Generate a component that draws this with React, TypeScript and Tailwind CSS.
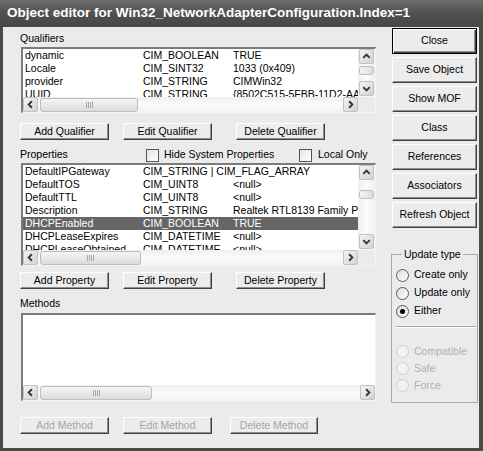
import React from "react";

type Row = { name: string; type: string; value: string; selected?: boolean };

const qualifiers: Row[] = [
  { name: "dynamic", type: "CIM_BOOLEAN", value: "TRUE" },
  { name: "Locale", type: "CIM_SINT32", value: "1033 (0x409)" },
  { name: "provider", type: "CIM_STRING", value: "CIMWin32" },
  { name: "UUID", type: "CIM_STRING", value: "{8502C515-5FBB-11D2-AAC1-006008C78BC7}" },
];

const properties: Row[] = [
  { name: "DefaultIPGateway", type: "CIM_STRING | CIM_FLAG_ARRAY", value: "" },
  { name: "DefaultTOS", type: "CIM_UINT8", value: "<null>" },
  { name: "DefaultTTL", type: "CIM_UINT8", value: "<null>" },
  { name: "Description", type: "CIM_STRING", value: "Realtek RTL8139 Family PCI Fast Ethernet NIC" },
  { name: "DHCPEnabled", type: "CIM_BOOLEAN", value: "TRUE", selected: true },
  { name: "DHCPLeaseExpires", type: "CIM_DATETIME", value: "<null>" },
  { name: "DHCPLeaseObtained", type: "CIM_DATETIME", value: "<null>" },
];

function Chevron({ dir }: { dir: "up" | "down" | "left" | "right" }) {
  const pts = {
    up: "3.5,8.5 7,5 10.5,8.5",
    down: "3.5,5.5 7,9 10.5,5.5",
    left: "8.5,3.5 5,7 8.5,10.5",
    right: "5.5,3.5 9,7 5.5,10.5",
  }[dir];
  return (
    <svg width="13" height="13" viewBox="0 0 14 14">
      <polyline points={pts} fill="none" stroke="#353535" strokeWidth="2" />
    </svg>
  );
}

function ArrowButton({ dir }: { dir: "up" | "down" | "left" | "right" }) {
  return (
    <div className="flex h-[15px] w-[15px] shrink-0 items-center justify-center rounded-[2px] border border-[#c2c2c2] bg-gradient-to-br from-[#f4f4f4] to-[#d2d2d2]">
      <Chevron dir={dir} />
    </div>
  );
}

function Grip() {
  return (
    <div className="flex gap-[1px]">
      {[0, 1, 2, 3].map((i) => (
        <div key={i} className="h-[6px] w-[1px] bg-[#a8a8a8]" />
      ))}
    </div>
  );
}

function HScroll({ thumb }: { thumb: string }) {
  return (
    <div className="flex h-[15px] shrink-0 items-center bg-gradient-to-b from-[#efefef] via-[#fbfbfb] to-[#f2f2f2]">
      <ArrowButton dir="left" />
      <div
        className={`ml-[2px] flex h-[14px] items-center justify-center rounded-[3px] border border-[#bdbdbd] bg-gradient-to-b from-[#f5f5f5] to-[#dcdcdc] ${thumb}`}
      >
        <Grip />
      </div>
      <div className="flex-1" />
      <ArrowButton dir="right" />
    </div>
  );
}

function VScroll({ thumbTop }: { thumbTop: string }) {
  return (
    <div className="flex w-[17px] shrink-0 flex-col items-center bg-gradient-to-r from-[#efefef] via-[#fbfbfb] to-[#f2f2f2]">
      <ArrowButton dir="up" />
      <div className={`h-[9px] w-[15px] rounded-[3px] border border-[#bdbdbd] bg-gradient-to-r from-[#f5f5f5] to-[#dcdcdc] ${thumbTop}`} />
      <div className="flex-1" />
      <div className="mb-[1px]">
        <ArrowButton dir="down" />
      </div>
    </div>
  );
}

function ListRows({ rows }: { rows: Row[] }) {
  return (
    <div className="flex-1 overflow-hidden">
      {rows.map((r) => (
        <div
          key={r.name}
          className={`flex h-[13px] items-center whitespace-nowrap leading-[13px] ${
            r.selected ? "bg-[#666666] text-white" : "text-black"
          }`}
        >
          <div className="w-[120px] shrink-0 pl-[2px]">{r.name}</div>
          <div className="w-[90px] shrink-0 overflow-visible">{r.type}</div>
          <div className="overflow-hidden">{r.value}</div>
        </div>
      ))}
    </div>
  );
}

function ListBox({ rows, height, thumb, thumbTop }: { rows: Row[]; height: string; thumb: string; thumbTop: string }) {
  return (
    <div className={`ml-[1px] flex w-[355px] flex-col border-t-2 border-l-2 border-r border-b border-t-[#7c7c7c] border-l-[#7c7c7c] border-r-[#f4f4f4] border-b-[#f4f4f4] bg-white ${height}`}>
      <div className="flex min-h-0 flex-1">
        <ListRows rows={rows} />
        <VScroll thumbTop={thumbTop} />
      </div>
      <div className="flex">
        <div className="flex-1">
          <HScroll thumb={thumb} />
        </div>
        <div className="w-[17px] bg-[#ebebeb]" />
      </div>
    </div>
  );
}

function Btn({ label, className = "", disabled, def }: { label: string; className?: string; disabled?: boolean; def?: boolean }) {
  return (
    <div
      className={`flex items-center justify-center border-t border-l border-r border-b bg-[#ececec] ${
        def
          ? "border-black shadow-[inset_1px_1px_0_#ffffff,inset_-1px_-1px_0_#404040,inset_-2px_-2px_0_#8e8e8e]"
          : "border-t-white border-l-white border-r-[#404040] border-b-[#404040] shadow-[inset_-1px_-1px_0_#8e8e8e]"
      } ${disabled ? "text-[#a6a6a6]" : "text-black"} ${className}`}
    >
      {label}
    </div>
  );
}

function Checkbox() {
  return <div className="h-[13px] w-[13px] shrink-0 border border-[#555] bg-gradient-to-br from-[#e4e4e4] to-white" />;
}

function Radio({ label, checked, disabled }: { label: string; checked?: boolean; disabled?: boolean }) {
  return (
    <div className="flex h-full items-center">
      <div
        className={`flex h-[13px] w-[13px] items-center justify-center rounded-full border ${
          disabled ? "border-[#cfcfcf] bg-[#f2f2f2]" : "border-[#5a5a5a] bg-gradient-to-br from-[#dcdcdc] to-white"
        }`}
      >
        {checked && <div className="h-[5px] w-[5px] rounded-full bg-black" />}
      </div>
      <span className={`ml-[5px] ${disabled ? "text-[#b0b0b0]" : "text-black"}`}>{label}</span>
    </div>
  );
}

export default function App() {
  return (
    <div className="flex h-[451px] w-[483px] flex-col bg-[#4a4a4a] font-['Liberation_Sans',Arial,sans-serif] text-[10.5px] text-black">
      <div className="flex h-[27px] shrink-0 items-center bg-gradient-to-b from-[#6c6c6c] via-[#505050] to-[#474747] pl-[7px] text-[13.5px] font-bold text-white">
        Object editor for Win32_NetworkAdapterConfiguration.Index=1
      </div>
      <div className="mb-[3px] ml-[3px] mr-[4px] flex flex-1 bg-[#ebebeb]">
        {/* left side */}
        <div className="ml-[17px] flex w-[356px] flex-col">
          <div className="mt-[5px] flex h-[14px] items-center">Qualifiers</div>
          <div className="mt-[1px]">
            <ListBox rows={qualifiers} height="h-[66px]" thumb="w-[98px]" thumbTop="mt-[2px]" />
          </div>
          <div className="mt-[10px] flex h-[17px]">
            <Btn label="Add Qualifier" className="w-[89px]" />
            <Btn label="Edit Qualifier" className="ml-[14px] w-[89px]" />
            <Btn label="Delete Qualifier" className="ml-[24px] w-[89px]" />
          </div>

          <div className="mt-[8px] flex h-[14px] items-center">
            <div className="w-[126px]">Properties</div>
            <div className="flex w-[153px] items-center">
              <Checkbox />
              <span className="ml-[5px]">Hide System Properties</span>
            </div>
            <div className="flex items-center">
              <Checkbox />
              <span className="ml-[6px]">Local Only</span>
            </div>
          </div>
          <div className="mt-[1px]">
            <ListBox rows={properties} height="h-[103px]" thumb="w-[101px]" thumbTop="mt-[10px]" />
          </div>
          <div className="mt-[6px] flex h-[17px]">
            <Btn label="Add Property" className="w-[89px]" />
            <Btn label="Edit Property" className="ml-[14px] w-[89px]" />
            <Btn label="Delete Property" className="ml-[24px] w-[89px]" />
          </div>

          <div className="mt-[8px] flex h-[14px] items-center">Methods</div>
          <div className="ml-[1px] mt-[2px] flex h-[88px] w-[355px] flex-col border-t-2 border-l-2 border-r border-b border-t-[#7c7c7c] border-l-[#7c7c7c] border-r-[#f4f4f4] border-b-[#f4f4f4] bg-white">
            <div className="flex-1" />
            <HScroll thumb="w-[112px]" />
          </div>
          <div className="mt-[16px] flex h-[17px]">
            <Btn label="Add Method" className="w-[89px]" disabled />
            <Btn label="Edit Method" className="ml-[14px] w-[89px]" disabled />
            <Btn label="Delete Method" className="ml-[18px] w-[88px]" disabled />
          </div>
        </div>

        {/* right side */}
        <div className="ml-[16px] flex w-[85px] flex-col">
          <div className="mt-[1px] flex flex-col gap-[3px]">
            <Btn label="Close" className="h-[26px]" def />
            <Btn label="Save Object" className="h-[26px]" />
            <Btn label="Show MOF" className="h-[26px]" />
            <Btn label="Class" className="h-[26px]" />
            <Btn label="References" className="h-[26px]" />
            <Btn label="Associators" className="h-[26px]" />
            <Btn label="Refresh Object" className="h-[26px]" />
          </div>
          <fieldset className="-ml-px mt-[19px] h-[156px] w-[87px] border border-[#a9a9a9] pl-[4px] pt-[5px]">
            <legend className="ml-[6px] h-[14px] px-[2px] leading-[14px]">Update type</legend>
            <div className="h-[18px]">
              <Radio label="Create only" />
            </div>
            <div className="h-[18px]">
              <Radio label="Update only" />
            </div>
            <div className="h-[18px]">
              <Radio label="Either" checked />
            </div>
            <div className="mr-[1px] mt-[6px] h-[2px] border-t border-b border-t-[#a9a9a9] border-b-white" />
            <div className="mt-[15px] h-[17px]">
              <Radio label="Compatible" disabled />
            </div>
            <div className="h-[17px]">
              <Radio label="Safe" disabled />
            </div>
            <div className="h-[17px]">
              <Radio label="Force" disabled />
            </div>
          </fieldset>
        </div>
      </div>
    </div>
  );
}
